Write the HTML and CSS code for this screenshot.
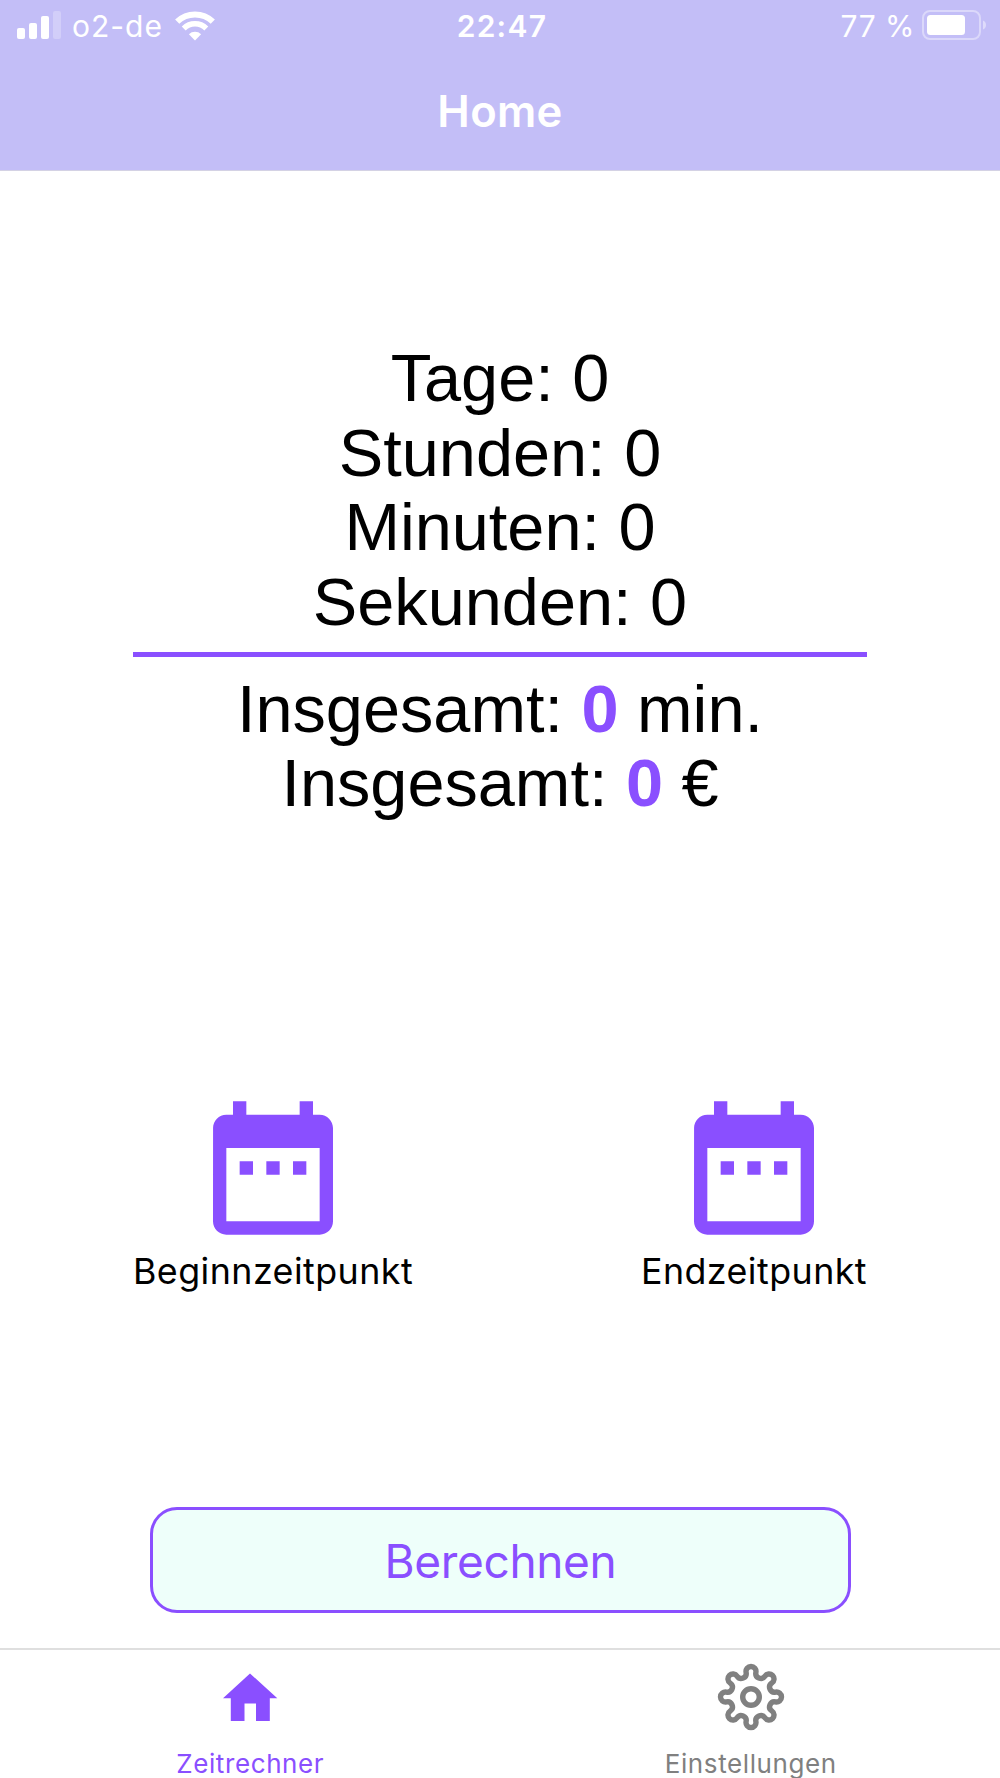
FILE: index.html
```html
<!DOCTYPE html>
<html lang="de">
<head>
  <meta charset="UTF-8" />
  <meta name="viewport" content="width=device-width, initial-scale=1.0" />
  <title>Zeitrechner</title>
  <link rel="stylesheet" href="styles.css">
</head>
<body>

  <header class="header">
    <div class="status-bar">
      <div class="status-left">
        <svg class="signal" viewBox="0 0 44 28">
          <rect x="0" y="17" width="8" height="11" rx="2" />
          <rect x="12" y="12" width="8" height="16" rx="2" />
          <rect x="24" y="5" width="8" height="23" rx="2" />
          <rect x="36" y="0" width="8" height="28" rx="2" opacity="0.25" />
        </svg>
        <span class="carrier">o2-de</span>
        <svg class="wifi" viewBox="0 0 40 30">
          <path d="M2.2 10.6A25.6 25.6 0 0 1 37.8 10.6" fill="none" stroke="#fff" stroke-width="6" />
          <path d="M8.7 17.4A16.2 16.2 0 0 1 31.3 17.4" fill="none" stroke="#fff" stroke-width="5.6" />
          <path d="M20 29.4L13.9 23.2A8.9 8.9 0 0 1 26.1 23.2Z" />
        </svg>
      </div>
      <span class="clock">22:47</span>
      <div class="status-right">
        <span class="percent">77 %</span>
        <svg class="battery" viewBox="0 0 65 30">
          <rect x="1" y="1" width="57" height="28" rx="7" fill="none" stroke="#fff" stroke-width="2" opacity="0.4" />
          <rect x="5" y="5" width="38" height="20" rx="3.5" />
          <path d="M61 10.5C65 12 65 18 61 19.5Z" opacity="0.45" />
        </svg>
      </div>
    </div>
    <h1 class="title">Home</h1>
  </header>

  <main class="content">
    <section class="result">
      <p>Tage: 0</p>
      <p>Stunden: 0</p>
      <p>Minuten: 0</p>
      <p>Sekunden: 0</p>
      <hr class="line">
      <p>Insgesamt: <b>0</b> min.</p>
      <p>Insgesamt: <b>0</b> €</p>
    </section>

    <section class="pickers">
      <div class="picker">
        <svg class="calendar" viewBox="0 0 24 24">
          <path d="M9 11H7v2h2v-2zm4 0h-2v2h2v-2zm4 0h-2v2h2v-2zm2-7h-1V2h-2v2H8V2H6v2H5c-1.11 0-1.99.9-1.99 2L3 20c0 1.1.89 2 2 2h14c1.1 0 2-.9 2-2V6c0-1.1-.9-2-2-2zm0 16H5V9h14v11z" />
        </svg>
        <span>Beginnzeitpunkt</span>
      </div>
      <div class="picker">
        <svg class="calendar" viewBox="0 0 24 24">
          <path d="M9 11H7v2h2v-2zm4 0h-2v2h2v-2zm4 0h-2v2h2v-2zm2-7h-1V2h-2v2H8V2H6v2H5c-1.11 0-1.99.9-1.99 2L3 20c0 1.1.89 2 2 2h14c1.1 0 2-.9 2-2V6c0-1.1-.9-2-2-2zm0 16H5V9h14v11z" />
        </svg>
        <span>Endzeitpunkt</span>
      </div>
    </section>

    <button class="calc-btn">Berechnen</button>
  </main>

  <nav class="tab-bar">
    <div class="tab-item active">
      <svg viewBox="-36 -36 72 72">
        <path d="M0 -23.5L27.3 1.2H19.8V24H6V6.5H-5.5V24H-19.2V1.2H-27Z" fill="currentColor" />
      </svg>
      <span>Zeitrechner</span>
    </div>
    <div class="tab-item settings">
      <svg viewBox="-36 -36 72 72" fill="none" stroke="currentColor" stroke-width="5.4">
        <circle r="8.3" />
        <path d="M-4.88 -24.53A4.98 4.98 0 1 1 4.88 -24.53A4.98 4.98 0 0 0 13.89 -20.8A4.98 4.98 0 1 1 20.8 -13.89A4.98 4.98 0 0 0 24.53 -4.88A4.98 4.98 0 1 1 24.53 4.88A4.98 4.98 0 0 0 20.8 13.89A4.98 4.98 0 1 1 13.89 20.8A4.98 4.98 0 0 0 4.88 24.53A4.98 4.98 0 1 1 -4.88 24.53A4.98 4.98 0 0 0 -13.89 20.8A4.98 4.98 0 1 1 -20.8 13.89A4.98 4.98 0 0 0 -24.53 4.88A4.98 4.98 0 1 1 -24.53 -4.88A4.98 4.98 0 0 0 -20.8 -13.89A4.98 4.98 0 1 1 -13.89 -20.8A4.98 4.98 0 0 0 -4.88 -24.53Z" />
      </svg>
      <span>Einstellungen</span>
    </div>
  </nav>

</body>
</html>
```
FILE: styles.css
```css
:root {
  --purple: #8a4fff;
  --header: #c3bef7;
}
* {
  box-sizing: border-box;
}
body {
  margin: 0;
  height: 1778px;
  display: flex;
  flex-direction: column;
  background: #fff;
  font-family: Inter, "Liberation Sans", sans-serif;
  color: #000;
  overflow: hidden;
}
svg {
  display: block;
  flex: none;
}
.header {
  height: 171px;
  background: var(--header);
  border-bottom: 1px solid #d4d2e4;
  color: #fff;
}
.status-bar {
  height: 53px;
  padding: 0 13px 0 17px;
  display: grid;
  grid-template-columns: 1fr auto 1fr;
  align-items: center;
  font-size: 30px;
  line-height: 53px;
  fill: #fff;
}
.status-left, .status-right {
  display: flex;
  align-items: center;
}
.status-right {
  justify-content: flex-end;
}
.signal {
  width: 44px;
  height: 28px;
  margin-top: -3px;
}
.carrier {
  margin-left: 11px;
  letter-spacing: 1px;
}
.wifi {
  width: 40px;
  height: 30px;
  margin: -1px 0 0 12px;
}
.clock {
  font-weight: 600;
  letter-spacing: 1.3px;
}
.percent {
  letter-spacing: 0.5px;
}
.battery {
  width: 65px;
  height: 30px;
  margin: -3px 0 0 7px;
}
.title {
  margin: 0;
  font-size: 43.6px;
  font-weight: 600;
  line-height: 53px;
  letter-spacing: 0.3px;
  padding-top: 32px;
  text-align: center;
}
.content {
  flex: 1;
  display: flex;
  flex-direction: column;
  padding: 170px 133px 0;
}
.result {
  font-family: "Liberation Sans", Arial, sans-serif;
  font-size: 66.67px;
  line-height: 74.67px;
  text-align: center;
}
.result p {
  margin: 0;
}
.result b {
  color: var(--purple);
}
.line {
  height: 5.4px;
  margin: 12px 0 14.6px;
  border: 0;
  background: var(--purple);
}
.pickers {
  display: flex;
  justify-content: space-between;
  margin-top: 267px;
}
.picker {
  display: flex;
  flex-direction: column;
  align-items: center;
  font-size: 35.8px;
  line-height: 46px;
  letter-spacing: 0.45px;
}
.calendar {
  width: 160px;
  height: 160px;
  fill: var(--purple);
}
.calc-btn {
  width: 701px;
  height: 106px;
  margin: 213px 0 0 17px;
  border: 3px solid var(--purple);
  border-radius: 27px;
  background: #eefffa;
  color: var(--purple);
  font-family: inherit;
  font-size: 46px;
  letter-spacing: -0.35px;
  padding: 2px 0 0;
}
.tab-bar {
  height: 130px;
  display: flex;
  border-top: 2px solid #dfdfdf;
}
.tab-item {
  flex: 1;
  display: flex;
  flex-direction: column;
  align-items: center;
  padding: 11px 0 0 1px;
  font-size: 26px;
  line-height: 32px;
  letter-spacing: 0.6px;
  color: var(--purple);
}
.tab-item svg {
  width: 72px;
  height: 72px;
}
.tab-item span {
  margin-top: 15px;
}
.settings {
  padding-left: 2px;
  color: #808080;
}
```
